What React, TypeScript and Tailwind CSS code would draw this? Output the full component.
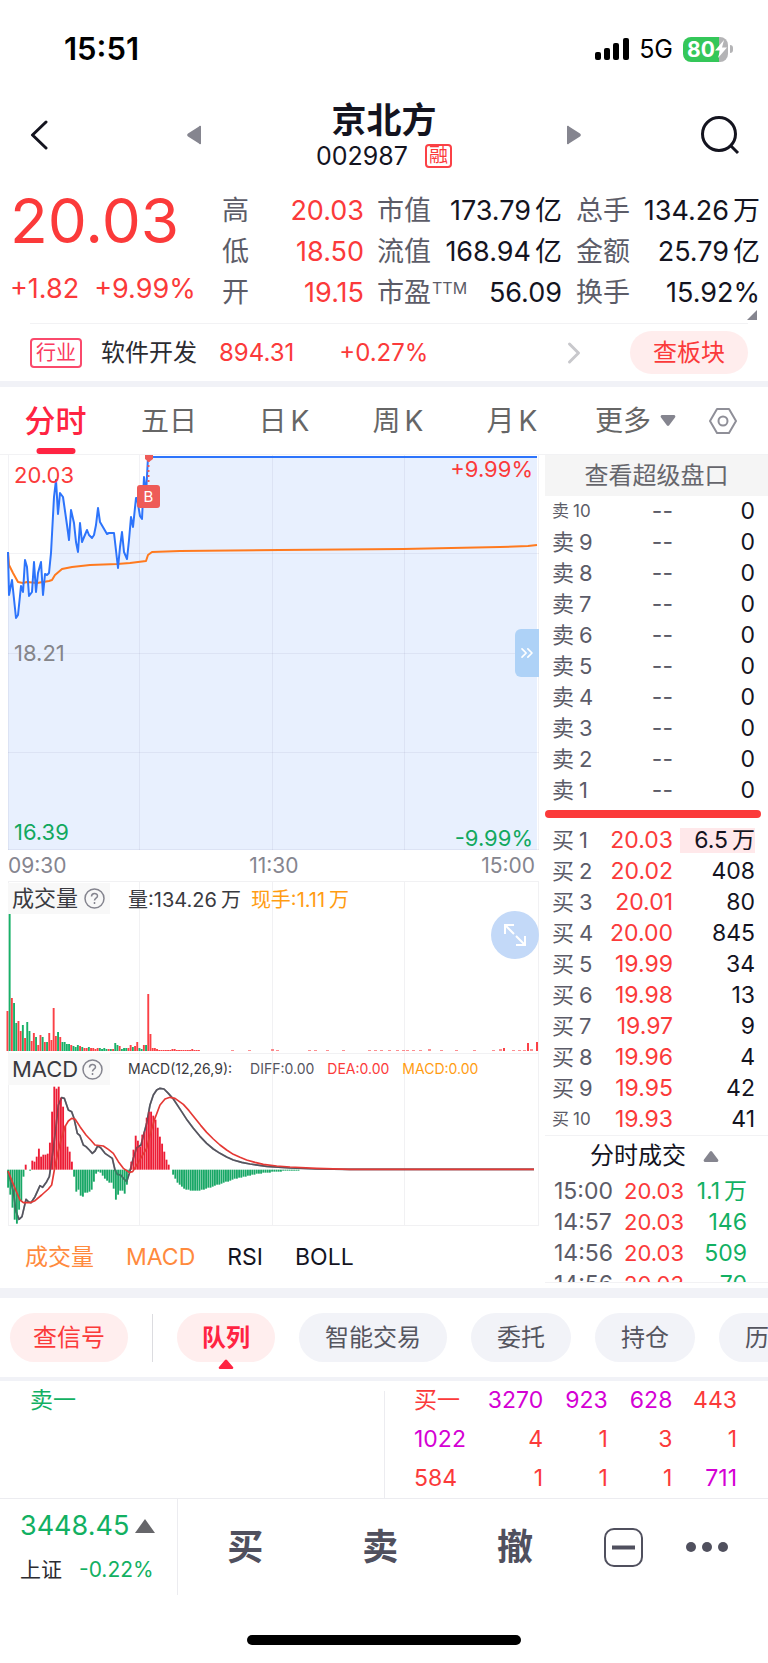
import { ChevronRight, ChevronsRight } from 'lucide-react'

type Tone = 'up' | 'down'

const STATS = [
  ['高', '20.03', '', '市值', '173.79', '亿', '总手', '134.26', '万'],
  ['低', '18.50', '', '流值', '168.94', '亿', '金额', '25.79', '亿'],
  ['开', '19.15', '', '市盈', '56.09', '', '换手', '15.92%', ''],
]

const BIDS = [
  ['1', '20.03', '6.5'],
  ['2', '20.02', '408'],
  ['3', '20.01', '80'],
  ['4', '20.00', '845'],
  ['5', '19.99', '34'],
  ['6', '19.98', '13'],
  ['7', '19.97', '9'],
  ['8', '19.96', '4'],
  ['9', '19.95', '42'],
  ['10', '19.93', '41'],
]

const ASKS = ['10', '9', '8', '7', '6', '5', '4', '3', '2', '1']

const TRADES = [
  ['15:00', '20.03', '1.1', '万'],
  ['14:57', '20.03', '146', ''],
  ['14:56', '20.03', '509', ''],
  ['14:56', '20.03', '70', ''],
]

const QUEUE = [
  ['买一', '3270', '923', '628', '443'],
  ['1022', '4', '1', '3', '1'],
  ['584', '1', '1', '1', '711'],
]

const PRICE_LINE =
  '0,97 1,140 4,125 8,163 10,160 13,131 15,137 17,105 19,112 21,141 24,137 26,107 28,137 30,118 33,107 35,140 37,119 39,120 41,118 43,98 46,42 48,25 50,59 52,38 55,42 59,70 61,85 63,55 66,68 68,87 70,97 72,68 74,87 79,75 81,80 84,83 86,80 88,70 90,53 92,67 99,79 101,78 106,78 110,113 112,92 114,77 116,97 119,104 121,85 123,62 125,72 128,43 129,43 132,61 134,64 136,22 138,40 140,2 529,2'

const AVG_LINE =
  '0,97 1,110 5,118 10,127 15,128 19,127 29,128 41,126 44,125 47,120 54,114 64,112 82,110 109,109 122,108 130,107 138,106 140,100 144,97 172,96 272,95 395,94 492,92 520,91 529,90'

// positive = up bar, negative = down bar
const VOLUMES = [
  40, -137, 53, -48, -28, 30, 20, -26, 13, -29, -20, 10, 18, -14, 6, 16, -14, 9, -9, 18, 11, 43, 15, -19, 14, -9, -9,
  -7, -7, 6, -5, -4, -6, 5, -4, 3, 3, -4, 3, 3, 2, 3, -3, -2, -3, -2, 2, -2, 2, -8, -6, 5, -2, -3, -3, 3, 6, -4, 5, 9,
  -3, -2, 6, -6, 57, 17, 3, 3, 2, 1, 1, 1, 1, 1, 1, 2, 2, 1, 1, 1, 1, 1, 1, 1, 2, 1, 1, 1,
]

const LATE_VOLUMES = [
  [223, 1], [240, 1], [263, 2], [268, 1], [300, 1], [306, 1], [318, 1], [334, 1], [360, 1], [366, 1], [372, 1],
  [380, 1], [388, 1], [394, 1], [398, 1], [404, 1], [411, 1], [420, 2], [432, 1], [447, 1], [465, 1], [484, 1],
  [491, 2], [495, 3], [504, 1], [510, 1], [515, 1], [519, 8], [522, 2], [528, 9],
]

const MACD_BARS = [
  -18, -25, -38, -50, -54, -40, -31, -7, 5, 0, -1, 9, 8, 13, 21, 13, 15, 15, 16, 27, 58, 83, 81, 83, 72, 63, 44, 23, 18,
  8, -7, -22, -20, -26, -27, -23, -23, -22, -20, -12, -4, -2, -3, -6, -9, -11, -13, -13, -19, -30, -25, -21, -21, -24,
  -15, -3, 8, 20, 34, 29, 23, 35, 38, 52, 58, 58, 54, 50, 42, 33, 26, 18, 10, 5, 0, -5, -9, -13, -15, -17, -19, -20,
  -20, -21, -21, -21, -21, -21, -20, -20, -19, -18, -18, -17, -16, -15, -15, -14, -13, -12, -12, -11, -10, -9, -9, -8,
  -8, -7, -7, -6, -6, -5, -5, -4, -4, -4, -3, -3, -3, -3, -2, -2, -2, -2, -2, -1, -1, -1, -1, -1, -1, -1, -1,
]

const DIFF_LINE =
  '24,378 40,440 48,500 57,523 66,515 78,463 85,470 93,473 105,455 120,422 128,427 140,410 148,395 153,360 160,310 168,245 175,180 185,158 193,160 205,195 215,200 222,220 232,265 240,272 250,300 258,305 268,315 277,325 285,318 293,303 302,308 315,325 325,332 337,340 345,375 352,388 362,390 372,402 380,410 388,385 400,340 410,308 423,300 432,265 440,235 450,180 460,150 470,135 480,130 492,132 505,145 520,162 545,200 562,226 580,250 600,274 620,295 640,312 660,325 680,336 700,345 725,352 750,357 800,364 870,369 950,372 1050,373 1602,373'

const DEA_LINE =
  '24,378 45,430 60,465 70,473 90,473 105,467 125,450 145,432 155,420 163,375 172,330 183,285 195,245 205,228 215,220 225,222 240,245 258,270 272,285 285,300 310,303 325,313 340,325 355,350 370,370 388,382 398,380 410,360 425,335 440,310 450,270 463,225 480,180 495,162 510,157 525,160 550,178 567,197 585,220 602,241 620,262 640,282 660,300 680,315 700,328 720,337 740,345 765,352 790,358 830,363 870,366 950,370 1050,373 1602,373'

const volumeColor = (value: number) => (value > 0 ? '#fb4146' : '#18b168')
const macdColor = (value: number) => (value > 0 ? '#ed1c35' : '#18a766')

function Amount({ value, unit }: { value: string; unit?: string }) {
  return (
    <>
      {value}
      {unit && <span className="ml-1">{unit}</span>}
    </>
  )
}

function StatusBar() {
  return (
    <div className="flex items-center justify-between pt-[30px] pr-[35px] pl-16 text-black">
      <span className="text-[31px] leading-[38px] font-semibold">15:51</span>
      <div className="flex items-center gap-[10px]">
        <svg className="h-[22px] w-[34px]" viewBox="0 0 34 22" aria-hidden="true">
          <rect x="0" y="14" width="6" height="8" rx="2" />
          <rect x="9" y="10" width="6" height="12" rx="2" />
          <rect x="18" y="5" width="6" height="17" rx="2" />
          <rect x="28" y="0" width="6" height="22" rx="2" />
        </svg>
        <span className="text-[25px] leading-[30px]">5G</span>
        <div className="flex items-center gap-[2px]">
          <div className="flex h-[25px] w-[45px] items-center rounded-lg bg-[linear-gradient(90deg,#34c759_80%,#b4b4b6_80%)] pl-1 text-white">
            <span className="text-[21px] leading-[25px] font-bold">80</span>
            <svg className="h-5 w-3" viewBox="0 0 12 20" fill="currentColor" aria-hidden="true">
              <path d="M9 1 0 11.500h5L3 19l9-10.500H7z" />
            </svg>
          </div>
          <span className="h-2 w-[3px] rounded-r-full bg-[#b4b4b6]" />
        </div>
      </div>
    </div>
  )
}

function Header() {
  return (
    <header className="flex items-center justify-between pt-8 pr-[28px] pb-5 pl-[18px] text-[#14141f]">
      <button aria-label="返回" className="w-[50px] pl-3">
        <svg className="h-[30px] w-[18px]" viewBox="0 0 18 30" fill="none" stroke="currentColor" strokeWidth="3">
          <path d="M16 2 2.500 15 16 28" strokeLinecap="round" strokeLinejoin="round" />
        </svg>
      </button>
      <div className="flex items-center gap-[114px]">
        <button aria-label="上一只">
          <svg className="h-5 w-[14px]" viewBox="0 0 14 20" fill="#85858f">
            <path d="M14 2v16a1 1 0 0 1-2 .5L1 11.500a2 2 0 0 1 0-3L12 1.500a1 1 0 0 1 2 .5z" />
          </svg>
        </button>
        <div className="flex w-[138px] flex-col items-center">
          <h1 className="text-[35px] leading-10 font-semibold">京北方</h1>
          <div className="mt-[2px] flex items-center gap-[17px] text-[25px] leading-7">
            002987
            <span className="rounded border-2 border-[#fb4146] px-[2px] text-[19px] leading-5 text-[#fb3a3a]">融</span>
          </div>
        </div>
        <button aria-label="下一只">
          <svg className="h-5 w-[14px]" viewBox="0 0 14 20" fill="#85858f">
            <path d="M0 2v16a1 1 0 0 0 2 .5l11-7a2 2 0 0 0 0-3L2 1.500A1 1 0 0 0 0 2z" />
          </svg>
        </button>
      </div>
      <button aria-label="搜索">
        <svg className="size-10" viewBox="0 0 40 40" fill="none" stroke="currentColor" strokeWidth="3">
          <circle cx="19" cy="19" r="16.500" />
          <path d="m30 30 8 8" />
        </svg>
      </button>
    </header>
  )
}

function Quote() {
  return (
    <section className="relative flex pr-2 pb-[10px] pl-[10px]">
      <div className="flex-1 text-[#fb3a3a]">
        <div className="text-[62px] leading-[62px]">20.03</div>
        <div className="mt-[22px] flex gap-[15px] text-[27px] leading-[30px]">
          <span>+1.82</span>
          <span>+9.99%</span>
        </div>
      </div>
      <table className="w-[538px] table-fixed text-[27px] leading-[41px] whitespace-nowrap text-[#14141f]">
        <colgroup>
          <col className="w-[42px]" />
          <col className="w-[100px]" />
          <col className="w-[96px]" />
          <col className="w-[102px]" />
          <col className="w-[68px]" />
          <col />
        </colgroup>
        <tbody>
          {STATS.map((row) => (
            <tr key={row[0]}>
              <th className="text-left font-normal text-[#5c5c68]">{row[0]}</th>
              <td className="text-right text-[#fb3a3a]">{row[1]}</td>
              <th className="pl-[13px] text-left font-normal text-[#5c5c68]">
                {row[3]}
                {row[3] === '市盈' && <sup className="ml-px text-[16px] leading-none">TTM</sup>}
              </th>
              <td>
                <div className="flex justify-end">
                  <Amount value={row[4]} unit={row[5]} />
                </div>
              </td>
              <th className="pl-[14px] text-left font-normal text-[#5c5c68]">{row[6]}</th>
              <td>
                <div className="flex justify-end">
                  <Amount value={row[7]} unit={row[8]} />
                </div>
              </td>
            </tr>
          ))}
        </tbody>
      </table>
      <svg className="absolute right-[11px] bottom-[3px] size-[10px]" viewBox="0 0 10 10" fill="#85858f">
        <path d="M10 0v10H0z" />
      </svg>
    </section>
  )
}

function Industry() {
  return (
    <section className="mr-5 ml-[30px] flex items-center border-t border-[#f2f2f4] py-[7px] text-[24px] leading-[43px]">
      <span className="rounded border-2 border-[#fa4a6c] px-[4px] text-[20px] leading-[26px] text-[#fa3a60]">行业</span>
      <span className="ml-[19px] text-[#2b2b30]">软件开发</span>
      <span className="ml-[22px] text-[#fb3a3a]">894.31</span>
      <span className="ml-[45px] text-[#fb3a3a]">+0.27%</span>
      <ChevronRight className="ml-auto size-9 text-[#c8c8cc]" strokeWidth={2} />
      <button className="ml-[38px] rounded-full bg-[#ffeded] px-[23px] text-[#fb3a3a]">查板块</button>
    </section>
  )
}

function PeriodTabs() {
  return (
    <nav className="grid grid-cols-[111fr_116fr_repeat(3,114fr)_133fr_42fr] items-center border-y border-t-transparent border-b-[#f2f2f4] pr-6 text-[28px] leading-[66px] whitespace-nowrap text-[#666]">
      <button className="relative text-[31px] font-medium text-[#ff2442]">
        分时
        <span className="absolute bottom-0 left-1/2 h-[6px] w-[39px] -translate-x-1/2 rounded-full bg-[#ff2442]" />
      </button>
      <button>五日</button>
      {['日', '周', '月'].map((unit) => (
        <button key={unit}>
          {unit}
          <span className="ml-1">K</span>
        </button>
      ))}
      <button className="flex items-center justify-center gap-[9px]">
        更多
        <svg className="h-3 w-4" viewBox="0 0 16 12" fill="#85858f">
          <path d="M2 0h12a1.500 1.500 0 0 1 1 2.500l-6 8a1.500 1.500 0 0 1-2 0l-6-8A1.500 1.500 0 0 1 2 0z" />
        </svg>
      </button>
      <button aria-label="设置" className="justify-self-center">
        <svg className="h-[26px] w-7" viewBox="0 0 28 26" fill="none" stroke="#8f8f98" strokeWidth="2">
          <path d="M8 1h12l7 12-7 12H8L1 13z" strokeLinejoin="round" />
          <circle cx="14" cy="13" r="4.500" />
        </svg>
      </button>
    </nav>
  )
}

function PriceChart() {
  return (
    <div className="relative text-[22px] leading-6">
      <svg className="block h-[395px] w-full overflow-visible" viewBox="0 0 531 395" preserveAspectRatio="none">
        <polygon points={`${PRICE_LINE} 529,395 0,395`} fill="#e8f0fe" />
        <path
          d="M.5 0v395M131.500 0v395M264.500 0v395M396.500 0v395M530.500 0v395M0 98.500h531M0 198.500h531M0 297.500h531M0 394.500h531"
          stroke="#1a2a50"
          strokeOpacity="0.06"
          fill="none"
        />
        <polyline points={AVG_LINE} fill="none" stroke="#ff7a1f" strokeWidth="2" strokeLinejoin="round" />
        <polyline points={PRICE_LINE} fill="none" stroke="#2d74fb" strokeWidth="2" strokeLinejoin="round" />
        <path d="M140.500 5v25" stroke="#ee5b58" strokeWidth="2" strokeDasharray="2 3" />
        <path d="M137 0h8v4l-4 3-4-3z" fill="#ee5b58" />
        <rect x="129" y="30" width="23" height="23" rx="3" fill="#ee5b58" />
        <text x="140.500" y="47" fontSize="15" textAnchor="middle" fill="#fff">
          B
        </text>
      </svg>
      <span className="absolute top-2 left-[6px] text-[#fb3a3a]">20.03</span>
      <span className="absolute top-[186px] left-[6px] text-[#85858a]">18.21</span>
      <span className="absolute bottom-[6px] left-[6px] text-[#12a85e]">16.39</span>
      <span className="absolute top-[2px] right-[6px] text-[#fb3a3a]">+9.99%</span>
      <span className="absolute right-[6px] bottom-0 text-[#12a85e]">-9.99%</span>
      <button
        aria-label="展开"
        className="absolute top-[174px] right-0 flex h-12 w-6 items-center justify-center rounded-l-md bg-[#aed2f7] text-white"
      >
        <ChevronsRight className="size-5" strokeWidth={2} />
      </button>
    </div>
  )
}

function HelpIcon() {
  return (
    <svg className="size-[21px]" viewBox="0 0 21 21" fill="none" stroke="#85858f" strokeWidth="1.500" aria-hidden="true">
      <circle cx="10.500" cy="10.500" r="9.500" />
      <path d="M7.500 8.500c0-4 6-4 6-.5 0 2.200-3 2.200-3 4.500M10.500 14v2" />
    </svg>
  )
}

function PaneGrid() {
  return <path d="M.5 0v172M131.500 0v172M264.500 0v172M396.500 0v172M530.500 0v172M0 .5h531" stroke="#f1f1f3" fill="none" />
}

function VolumeChart() {
  return (
    <div className="relative">
      <svg className="block h-[172px] w-full overflow-visible" viewBox="0 0 531 172" preserveAspectRatio="none">
        <PaneGrid />
        {VOLUMES.map((value, i) => (
          <rect
            key={i}
            x={-1.5 + i * 2.2}
            y={170 - Math.abs(value)}
            width="1.900"
            height={Math.abs(value)}
            fill={volumeColor(value)}
          />
        ))}
        {LATE_VOLUMES.map(([x, value]) => (
          <rect
            key={x}
            x={x}
            y={170 - value}
            width={value > 2 ? 2 : 3}
            height={value}
            fill="#fb4146"
            opacity={value > 2 ? 1 : 0.6}
          />
        ))}
      </svg>
      <div className="absolute inset-x-0 top-0 flex items-center text-[20px] leading-[31px]">
        <button className="flex w-[102px] items-center gap-[6px] bg-[#f8f8f8] pl-1 text-[22px] text-[#3a3a40]">
          成交量
          <HelpIcon />
        </button>
        <span className="ml-[18px] pt-1 text-[#3a3a40]">
          量:
          <Amount value="134.26" unit="万" />
        </span>
        <span className="ml-[10px] pt-1 text-[#ff9c12]">
          现手:
          <Amount value="1.11" unit="万" />
        </span>
      </div>
      <button
        aria-label="放大"
        className="absolute top-[30px] right-0 flex size-12 items-center justify-center rounded-full bg-[#c3d9f8] text-white"
      >
        <svg className="size-[22px]" viewBox="0 0 22 22" fill="none" stroke="currentColor" strokeWidth="2">
          <path d="M10 1H1v9M1 1l9 9M12 21h9v-9M21 21l-9-9" />
        </svg>
      </button>
    </div>
  )
}

function MacdChart() {
  return (
    <div className="relative">
      <svg className="block h-[173px] w-full overflow-visible" viewBox="24 24 1593 519" preserveAspectRatio="none">
        <path
          d="M25.500 24v517M418.500 24v517M817.500 24v517M1213.500 24v517M1615.500 24v517M24 25.500h1593M24 541.500h1593"
          stroke="#f1f1f3"
          strokeWidth="3"
          fill="none"
        />
        <polyline points={DIFF_LINE} fill="none" stroke="#55555f" strokeWidth="5" strokeLinejoin="round" />
        {MACD_BARS.map((value, i) => (
          <rect
            key={i}
            x={21.5 + i * 6.6}
            y={value > 0 ? 374 - value * 3 : 374}
            width="5.600"
            height={Math.abs(value) * 3}
            fill={macdColor(value)}
          />
        ))}
        <polyline points={DIFF_LINE} fill="none" stroke="#55555f" strokeWidth="5" strokeOpacity="0.5" strokeLinejoin="round" />
        <polyline points={DEA_LINE} fill="none" stroke="#e53935" strokeWidth="5" strokeLinejoin="round" />
      </svg>
      <div className="absolute inset-x-0 top-0 flex items-center text-[14px] leading-8 text-[#55555f]">
        <button className="flex w-[102px] items-center gap-1 bg-[#f8f8f8] pl-1 text-[22px] text-[#3a3a40]">
          MACD
          <HelpIcon />
        </button>
        <span className="ml-[18px] text-[#3a3a40]">MACD(12,26,9):</span>
        <span className="ml-[18px]">DIFF:0.00</span>
        <span className="ml-[13px] text-[#fb3a3a]">DEA:0.00</span>
        <span className="ml-[13px] text-[#ff9c12]">MACD:0.00</span>
      </div>
    </div>
  )
}

function LevelLabel({ side, level }: { side: string; level: string }) {
  if (level === '10') {
    return (
      <th className="pl-[7px] text-left text-[17px] font-normal text-[#5c5c68]">
        {side}
        <span className="ml-1">{level}</span>
      </th>
    )
  }
  return (
    <th className="pl-[7px] text-left text-[22px] font-normal text-[#5c5c68]">
      {side}
      <span className="ml-[5px]">{level}</span>
    </th>
  )
}

function OrderBook() {
  return (
    <aside className="w-[223px] shrink-0 text-[23px] leading-[31px] whitespace-nowrap text-[#14141f]">
      <button className="block w-full bg-[#f5f5f5] text-[24px] leading-[41px] text-[#66666c]">查看超级盘口</button>
      <table className="w-[210px] table-fixed">
        <colgroup>
          <col className="w-[54px]" />
          <col className="w-[74px]" />
          <col />
        </colgroup>
        <tbody>
          {ASKS.map((level) => (
            <tr key={level}>
              <LevelLabel side="卖" level={level} />
              <td className="text-right text-[#5c5c68]">--</td>
              <td className="text-right">0</td>
            </tr>
          ))}
        </tbody>
      </table>
      <div className="mt-1 mr-[7px] mb-[7px] h-2 rounded-full bg-[#fb3a3a]" />
      <table className="w-[210px] table-fixed">
        <colgroup>
          <col className="w-[54px]" />
          <col className="w-[74px]" />
          <col />
        </colgroup>
        <tbody>
          {BIDS.map(([level, price, volume]) => (
            <tr key={level}>
              <LevelLabel side="买" level={level} />
              <td className="text-right text-[#fb3a3a]">{price}</td>
              <td className="pl-[7px] text-right">
                {level === '1' ? (
                  <div className="bg-[#ffe8ea] leading-[25px]">
                    <Amount value={volume} unit="万" />
                  </div>
                ) : (
                  volume
                )}
              </td>
            </tr>
          ))}
        </tbody>
      </table>
      <button className="flex w-full items-center justify-center gap-[17px] border-t border-[#f2f2f4] pr-1 text-[24px] leading-10">
        分时成交
        <svg className="h-3 w-4" viewBox="0 0 16 12" fill="#85858f">
          <path d="M2 12h12a1.500 1.500 0 0 0 1-2.500l-6-8a1.500 1.500 0 0 0-2 0l-6 8A1.500 1.500 0 0 0 2 12z" />
        </svg>
      </button>
      <div className="h-[107px] overflow-hidden border-b border-[#f2f2f4]">
        <table className="w-[202px] table-fixed">
          <tbody>
            {TRADES.map(([time, price, volume, unit], i) => (
              <tr key={i}>
                <td className="w-[73px] pl-[9px] text-[#5c5c68]">{time}</td>
                <td className="w-[66px] text-right text-[22px] text-[#fb3a3a]">{price}</td>
                <td className="text-right text-[#12b062]">
                  <Amount value={volume} unit={unit} />
                </td>
              </tr>
            ))}
          </tbody>
        </table>
      </div>
    </aside>
  )
}

function ActionPills() {
  return (
    <nav className="flex items-center gap-6 overflow-hidden py-[15px] pl-[10px] text-[24px] leading-[49px] whitespace-nowrap text-[#55555f]">
      <button className="shrink-0 rounded-full bg-[#ffeeee] px-[23px] text-[#fb3a3a]">查信号</button>
      <span className="h-12 w-px shrink-0 bg-[#dcdce0]" />
      <button className="relative shrink-0 rounded-full bg-[#ffeeee] px-[25px] font-semibold text-[#ff2442]">
        队列
        <svg className="absolute -bottom-[7px] left-1/2 h-[10px] w-4 -translate-x-1/2" viewBox="0 0 16 10" fill="#ff2442">
          <path d="M2 10h12a1.200 1.200 0 0 0 1-2L9 1a1.500 1.500 0 0 0-2 0L1 8a1.200 1.200 0 0 0 1 2z" />
        </svg>
      </button>
      {['智能交易', '委托', '持仓', '历史'].map((label) => (
        <button key={label} className="shrink-0 rounded-full bg-[#f2f3f8] px-[26px]">
          {label}
        </button>
      ))}
    </nav>
  )
}

function queueColor(value: string) {
  return Number(value) > 600 ? 'text-[#d400d4]' : 'text-[#fb3a3a]'
}

function Queue() {
  return (
    <section className="grid grid-cols-2 text-[23px] leading-[39px]">
      <div className="pl-[30px] text-[#12b062]">卖一</div>
      <div className="relative pr-[31px] pl-[30px]">
        <span className="absolute top-[10px] bottom-0 left-0 w-px bg-[#ececf0]" />
        <table className="w-full table-fixed">
          <tbody>
            {QUEUE.map((row) => (
              <tr key={row[0]}>
                {row.map((value, i) => (
                  <td key={i} className={i === 0 ? `${queueColor(value)} text-left` : `${queueColor(value)} text-right`}>
                    {value}
                  </td>
                ))}
              </tr>
            ))}
          </tbody>
        </table>
      </div>
    </section>
  )
}

function IndexTicker({ tone }: { tone: Tone }) {
  const color = tone === 'down' ? 'text-[#12b062]' : 'text-[#fb3a3a]'
  return (
    <div className="w-[178px] border-r border-[#ececf0] pt-[8px] pb-[5px] pl-5">
      <div className={`${color} flex items-center gap-[6px] text-[27px] leading-[38px]`}>
        3448.45
        <svg className="h-[14px] w-5" viewBox="0 0 20 14" fill="#66666a">
          <path d="M10 0l10 14H0z" />
        </svg>
      </div>
      <div className="mt-[5px] flex items-center gap-[17px] text-[21px] leading-10">
        <span className="text-[#2b2b30]">上证</span>
        <span className={color}>-0.22%</span>
      </div>
    </div>
  )
}

function BottomBar() {
  return (
    <footer className="flex border-t border-[#ececf0]">
      <IndexTicker tone="down" />
      <div className="grid flex-1 grid-cols-[repeat(3,135fr)_83fr_84fr] items-center pr-[19px] text-[36px] font-semibold text-[#50505e]">
        <button>买</button>
        <button>卖</button>
        <button>撤</button>
        <button aria-label="收起" className="justify-self-center">
          <svg className="size-[39px]" viewBox="0 0 39 39" fill="none" stroke="currentColor">
            <rect x="1" y="1" width="37" height="37" rx="9" strokeWidth="2" />
            <path d="M8 19.500h23" strokeWidth="4" />
          </svg>
        </button>
        <button aria-label="更多" className="justify-self-center">
          <svg className="h-3 w-[42px]" viewBox="0 0 42 12" fill="currentColor">
            <circle cx="5" cy="6" r="5" />
            <circle cx="21" cy="6" r="5" />
            <circle cx="37" cy="6" r="5" />
          </svg>
        </button>
      </div>
    </footer>
  )
}

export default function App() {
  return (
    <main className="min-h-screen bg-white font-['Inter','Noto_Sans_CJK_SC',sans-serif]">
      <StatusBar />
      <Header />
      <Quote />
      <Industry />
      <div className="h-[6px] bg-[#f1f2f7]" />
      <PeriodTabs />
      <div className="flex">
        <div className="min-w-0 flex-1 pr-[6px] pl-2">
          <PriceChart />
          <div className="flex justify-between pr-1 text-[21px] leading-[31px] text-[#85858f]">
            <span>09:30</span>
            <span>11:30</span>
            <span>15:00</span>
          </div>
          <VolumeChart />
          <MacdChart />
          <div className="flex gap-8 pl-[17px] text-[23px] leading-[62px] text-[#14141f]">
            <button className="text-[#ff8a3d]">成交量</button>
            <button className="text-[#ff8a3d]">MACD</button>
            <button>RSI</button>
            <button>BOLL</button>
          </div>
        </div>
        <OrderBook />
      </div>
      <div className="h-[10px] bg-[#f1f2f7]" />
      <ActionPills />
      <div className="h-1 bg-[#f1f2f7]" />
      <Queue />
      <BottomBar />
      <div className="mx-auto mt-10 h-[10px] w-[274px] rounded-full bg-black" />
    </main>
  )
}
